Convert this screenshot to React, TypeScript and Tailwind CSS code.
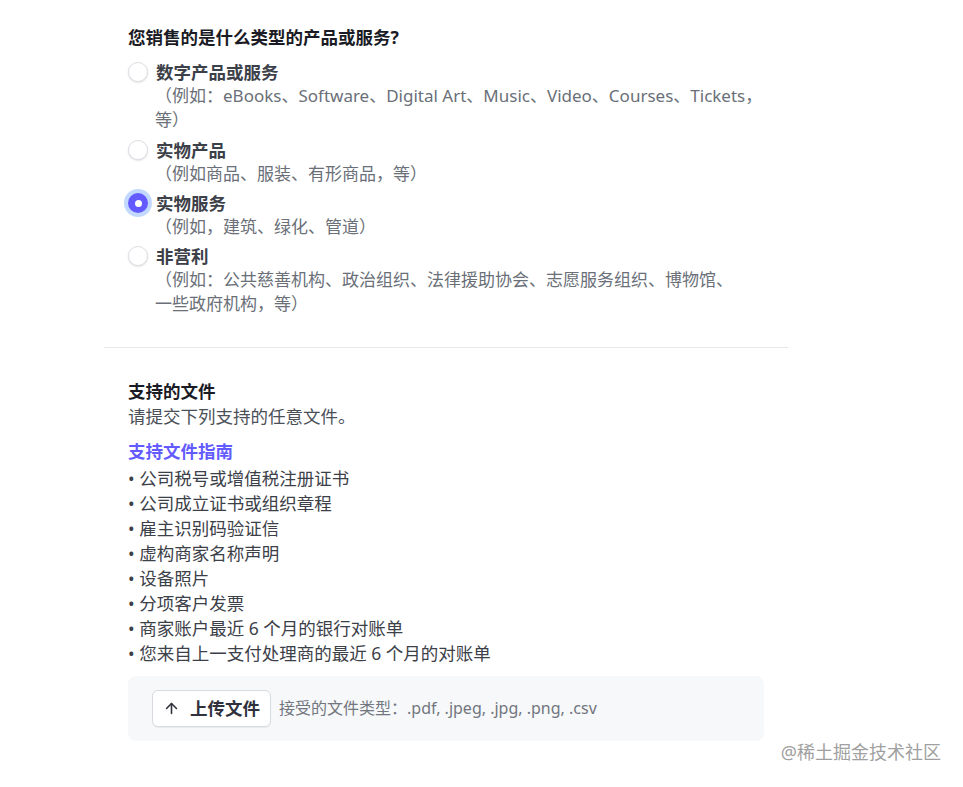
import { ArrowUp } from "lucide-react";
import type { ReactNode } from "react";

const font = { fontFamily: '"Noto Sans", "Noto Sans CJK SC", sans-serif' };

const options: { label: string; desc: ReactNode; checked?: boolean }[] = [
  {
    label: "数字产品或服务",
    desc: "（例如：eBooks、Software、Digital Art、Music、Video、Courses、Tickets，等）",
  },
  { label: "实物产品", desc: "（例如商品、服装、有形商品，等）" },
  { label: "实物服务", desc: "（例如，建筑、绿化、管道）", checked: true },
  {
    label: "非营利",
    desc: (
      <>
        （例如：公共慈善机构、政治组织、法律援助协会、志愿服务组织、博物馆、
        <span className="whitespace-nowrap">一些</span>政府机构，等）
      </>
    ),
  },
];

const docs = [
  "公司税号或增值税注册证书",
  "公司成立证书或组织章程",
  "雇主识别码验证信",
  "虚构商家名称声明",
  "设备照片",
  "分项客户发票",
  "商家账户最近 6 个月的银行对账单",
  "您来自上一支付处理商的最近 6 个月的对账单",
];

function Radio({ checked }: { checked?: boolean }) {
  if (checked) {
    return (
      <span className="flex h-[20px] w-[20px] shrink-0 items-center justify-center rounded-full bg-[#635bff] ring-4 ring-[#a9c8ff]/70">
        <span className="h-[7px] w-[7px] rounded-full bg-white" />
      </span>
    );
  }
  return (
    <span className="h-[20px] w-[20px] shrink-0 rounded-full border border-[#dcdfe4] bg-white shadow-[0_1px_2px_rgba(0,0,0,0.12)]" />
  );
}

export default function App() {
  return (
    <div className="relative min-h-screen bg-white" style={font}>
      <div className="ml-[104px] w-[684px]">
        <div className="px-6 pt-[25px] pb-[31.5px]">
          <h2 className="text-[17.5px] leading-6 font-bold text-[#1a1b25]">
            您销售的是什么类型的产品或服务?
          </h2>
          <div className="mt-[11px] flex flex-col gap-[5.5px]">
            {options.map((o, i) => (
              <div key={o.label} className={i === 0 ? "pb-[1.5px]" : ""}>
                <div className="flex items-center gap-2">
                  <Radio checked={o.checked} />
                  <span className="text-[17.5px] leading-6 font-bold text-[#3c4048]">{o.label}</span>
                </div>
                <p className="pl-[27px] text-[17px] leading-[23.5px] text-[#6a6f78]">{o.desc}</p>
              </div>
            ))}
          </div>
        </div>

        <div className="h-px bg-[#e6e8eb]" />

        <div className="px-6 pt-[31px]">
          <h3 className="text-[17.5px] leading-[25px] font-bold text-[#1a1b25]">支持的文件</h3>
          <p className="text-[17.5px] leading-[25px] text-[#4b5058]">请提交下列支持的任意文件。</p>
          <a className="mt-[10px] block text-[17.5px] leading-[25px] font-bold text-[#635bff]">
            支持文件指南
          </a>
          <ul className="mt-[2px] text-[17.5px] leading-[25px] text-[#3c4048]">
            {docs.map((d) => (
              <li key={d}>• {d}</li>
            ))}
          </ul>
          <div className="mt-[10px] flex items-center gap-[8px] rounded-lg bg-[#f6f8fa] px-6 py-[14px]">
            <button className="flex h-[37px] items-center gap-[10px] rounded-md border border-[#d8dce1] bg-white px-[10px] shadow-[0_1px_1px_rgba(0,0,0,0.06)]">
              <ArrowUp size={17} strokeWidth={2.2} className="text-[#30313d]" />
              <span className="text-[17.5px] font-bold text-[#30313d]">上传文件</span>
            </button>
            <span className="text-[16px] text-[#72767e]">接受的文件类型：.pdf, .jpeg, .jpg, .png, .csv</span>
          </div>
        </div>
      </div>

      <div className="absolute top-[740px] right-[22px] text-[18px] leading-6 text-[#a0a0a0]">
        @稀土掘金技术社区
      </div>
    </div>
  );
}
